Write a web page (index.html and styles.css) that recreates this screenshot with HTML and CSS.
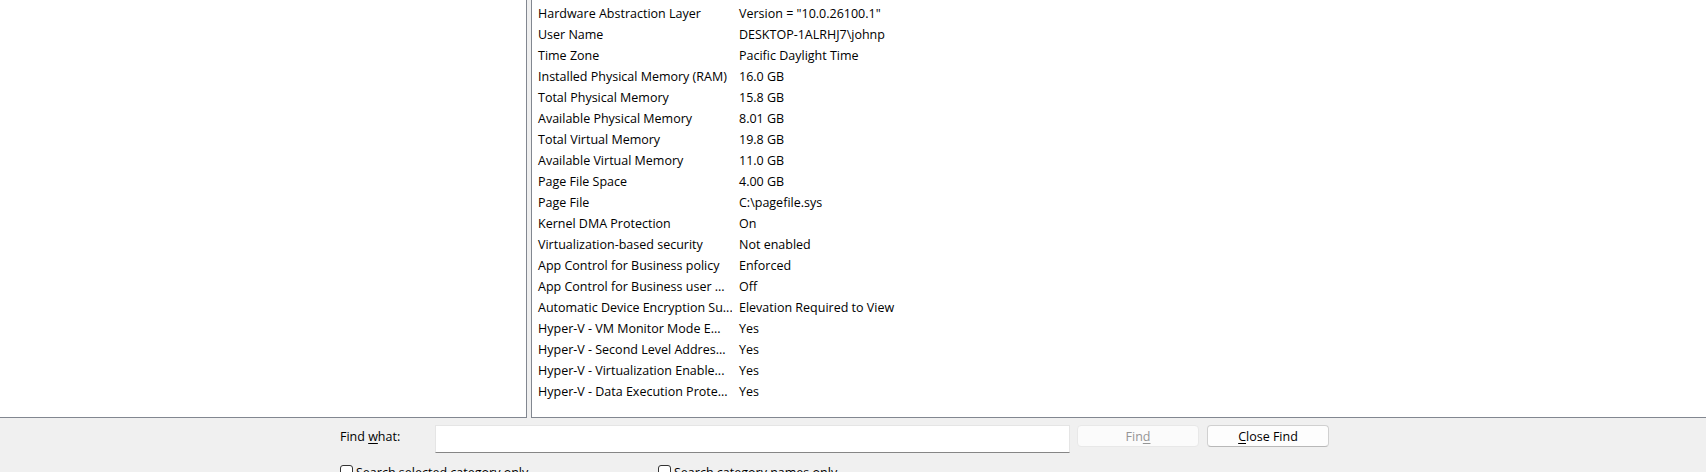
FILE: index.html
```html
<!DOCTYPE html>
<html lang="en">
<head>
<meta charset="utf-8">
<title>System Information</title>
<link rel="stylesheet" href="styles.css">
</head>
<body>
<div class="app">
  <div class="panes">
    <div class="tree"></div>
    <div class="list">
      <div class="row"><span class="k">Hardware Abstraction Layer</span><span class="v">Version = "10.0.26100.1"</span></div>
      <div class="row"><span class="k">User Name</span><span class="v">DESKTOP-1ALRHJ7\johnp</span></div>
      <div class="row"><span class="k">Time Zone</span><span class="v">Pacific Daylight Time</span></div>
      <div class="row"><span class="k">Installed Physical Memory (RAM)</span><span class="v">16.0 GB</span></div>
      <div class="row"><span class="k">Total Physical Memory</span><span class="v">15.8 GB</span></div>
      <div class="row"><span class="k">Available Physical Memory</span><span class="v">8.01 GB</span></div>
      <div class="row"><span class="k">Total Virtual Memory</span><span class="v">19.8 GB</span></div>
      <div class="row"><span class="k">Available Virtual Memory</span><span class="v">11.0 GB</span></div>
      <div class="row"><span class="k">Page File Space</span><span class="v">4.00 GB</span></div>
      <div class="row"><span class="k">Page File</span><span class="v">C:\pagefile.sys</span></div>
      <div class="row"><span class="k">Kernel DMA Protection</span><span class="v">On</span></div>
      <div class="row"><span class="k">Virtualization-based security</span><span class="v">Not enabled</span></div>
      <div class="row"><span class="k">App Control for Business policy</span><span class="v">Enforced</span></div>
      <div class="row"><span class="k">App Control for Business user ...</span><span class="v">Off</span></div>
      <div class="row"><span class="k">Automatic Device Encryption Su...</span><span class="v">Elevation Required to View</span></div>
      <div class="row"><span class="k">Hyper-V - VM Monitor Mode E...</span><span class="v">Yes</span></div>
      <div class="row"><span class="k">Hyper-V - Second Level Addres...</span><span class="v">Yes</span></div>
      <div class="row"><span class="k">Hyper-V - Virtualization Enable...</span><span class="v">Yes</span></div>
      <div class="row"><span class="k">Hyper-V - Data Execution Prote...</span><span class="v">Yes</span></div>
    </div>
  </div>
  <div class="find">
    <div class="find-row">
      <span class="lbl">Find <u>w</u>hat:</span>
      <div class="input"></div>
      <div class="btn disabled">Fin<u>d</u></div>
      <div class="btn"><u>C</u>lose Find</div>
    </div>
    <div class="check-row">
      <div class="cb first"><span class="box"></span><span class="cb-text">Search selected category only</span></div>
      <div class="cb"><span class="box"></span><span class="cb-text">Search category names only</span></div>
    </div>
  </div>
</div>
</body>
</html>
```

FILE: styles.css
```css
html, body {
  margin: 0;
  padding: 0;
}
body {
  width: 1706px;
  height: 472px;
  overflow: hidden;
  background: #f0f0f0;
  font-family: "Open Sans", "Noto Sans", sans-serif;
  font-size: 12.5px;
  color: #000;
}
.panes {
  display: flex;
  height: 418px;
}
.tree {
  width: 527px;
  height: 418px;
  box-sizing: border-box;
  background: #fff;
  border-right: 1px solid #828790;
  border-bottom: 1px solid #828790;
}
.list {
  flex: 1;
  margin-left: 4px;
  height: 418px;
  box-sizing: border-box;
  background: #fff;
  border-left: 1px solid #828790;
  border-bottom: 1px solid #828790;
  padding-top: 3px;
  overflow: hidden;
}
.row {
  display: flex;
  height: 21px;
  line-height: 21px;
  white-space: nowrap;
}
.k {
  width: 200px;
  flex: none;
  box-sizing: border-box;
  padding-left: 6px;
  overflow: hidden;
}
.v {
  padding-left: 7px;
}
.find {
  padding: 7px 0 0 340px;
}
.find-row {
  display: flex;
  align-items: flex-start;
  height: 28px;
}
.lbl {
  width: 95px;
  flex: none;
  line-height: 22px;
  padding-top: 1px;
}
u {
  text-decoration-thickness: 1px;
  text-underline-offset: 2px;
}
.input {
  width: 635px;
  height: 28px;
  box-sizing: border-box;
  background: #fff;
  border: 1px solid #e5e5e5;
  border-bottom-color: #868686;
}
.btn {
  width: 122px;
  height: 22px;
  box-sizing: border-box;
  margin-left: 8px;
  border: 1px solid #d0d0d0;
  border-bottom-color: #b8b8b8;
  border-radius: 4px;
  background: #fdfdfd;
  text-align: center;
  line-height: 19px;
  padding-top: 1px;
}
.btn.disabled {
  margin-left: 7px;
  background: #fbfbfb;
  border-color: #e8e8e8;
  color: #959595;
}
.check-row {
  display: flex;
  margin-top: 12px;
}
.cb {
  display: flex;
  align-items: flex-start;
}
.cb.first {
  width: 318px;
}
.box {
  width: 13px;
  height: 13px;
  box-sizing: border-box;
  border: 1px solid #333;
  border-radius: 3px;
  background: #fff;
}
.cb-text {
  margin-left: 3px;
  line-height: 15px;
}
```
